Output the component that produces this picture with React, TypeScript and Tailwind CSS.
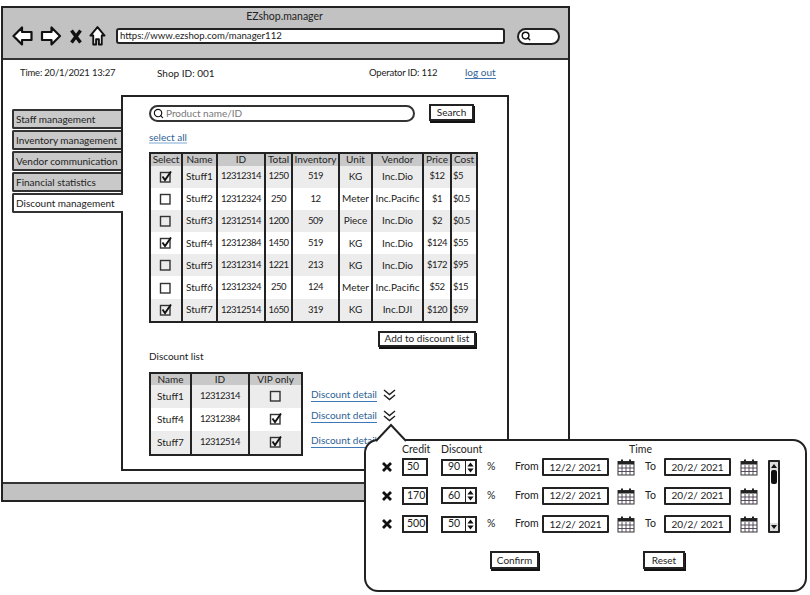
import { Search } from "lucide-react";

type Product = {
  name: string;
  id: string;
  total: string;
  inventory: string;
  unit: string;
  vendor: string;
  price: string;
  cost: string;
  selected: boolean;
};

const products: Product[] = [
  { name: "Stuff1", id: "12312314", total: "1250", inventory: "519", unit: "KG", vendor: "Inc.Dio", price: "$12", cost: "$5", selected: true },
  { name: "Stuff2", id: "12312324", total: "250", inventory: "12", unit: "Meter", vendor: "Inc.Pacific", price: "$1", cost: "$0.5", selected: false },
  { name: "Stuff3", id: "12312514", total: "1200", inventory: "509", unit: "Piece", vendor: "Inc.Dio", price: "$2", cost: "$0.5", selected: false },
  { name: "Stuff4", id: "12312384", total: "1450", inventory: "519", unit: "KG", vendor: "Inc.Dio", price: "$124", cost: "$55", selected: true },
  { name: "Stuff5", id: "12312314", total: "1221", inventory: "213", unit: "KG", vendor: "Inc.Dio", price: "$172", cost: "$95", selected: false },
  { name: "Stuff6", id: "12312324", total: "250", inventory: "124", unit: "Meter", vendor: "Inc.Pacific", price: "$52", cost: "$15", selected: false },
  { name: "Stuff7", id: "12312514", total: "1650", inventory: "319", unit: "KG", vendor: "Inc.DJI", price: "$120", cost: "$59", selected: true },
];

const discounts = [
  { name: "Stuff1", id: "12312314", vip: false },
  { name: "Stuff4", id: "12312384", vip: true },
  { name: "Stuff7", id: "12312514", vip: true },
];

const rules = [
  { credit: "50", discount: "90" },
  { credit: "170", discount: "60" },
  { credit: "500", discount: "50" },
];

const tabs = ["Staff management", "Inventory management", "Vendor communication", "Financial statistics"];

const productCols = "grid grid-cols-[32px_35px_48px_27px_47px_33px_51px_28px_24px]";
const discountCols = "grid grid-cols-[41px_58px_51px]";
const ruleCols = "grid grid-cols-[22px_39px_44px_25px_32px_75px_28px_19px_76px_28px]";
const numeric = "text-[9.5px] tracking-[-0.5px]";

function Checkbox({ checked }: { checked: boolean }) {
  return (
    <svg width="14" height="14" viewBox="0 0 14 14" fill="none">
      <rect x="1.5" y="2.5" width="9.5" height="9.5" stroke="#333" strokeWidth="1.4" />
      {checked && <path d="M3.5 6.5l2.5 3.5 6-8.5" stroke="#111" strokeWidth="1.9" />}
    </svg>
  );
}

function DoubleChevron() {
  return (
    <svg width="13" height="12" viewBox="0 0 13 12" fill="none" stroke="#222" strokeWidth="1.5">
      <path d="M1 1l5.5 4.5L12 1" />
      <path d="M1 6l5.5 4.5L12 6" />
    </svg>
  );
}

function Calendar() {
  return (
    <svg width="18" height="18" viewBox="0 0 18 18" fill="none">
      <rect x="1" y="3.5" width="16" height="13.5" fill="#fff" stroke="#333" />
      <rect x="1" y="3.5" width="16" height="3" fill="#222" />
      <path d="M1 10h16M1 13.5h16M5 7v10M9 7v10M13 7v10" stroke="#4a4050" strokeWidth="0.9" />
      <path d="M5 4V1.5M13 4V1.5" stroke="#222" strokeWidth="2" />
    </svg>
  );
}

function SketchButton({ label, className }: { label: string; className: string }) {
  return (
    <button className={`flex items-center justify-center border-2 border-[#222] bg-white shadow-[1px_2px_0_#111] text-[#222] ${className}`}>
      {label}
    </button>
  );
}

function Toolbar() {
  return (
    <div className="h-[52px] shrink-0 border-b-2 border-[#333] bg-[#c2c2c2]">
      <div className="h-[17px] pr-[2px] text-center leading-[17px] text-[#222]">EZshop.manager</div>
      <div className="flex items-center pl-[9px]">
        <svg width="50" height="22" viewBox="0 0 50 22" fill="#fff" stroke="#111" strokeWidth="2.2" strokeLinejoin="round">
          <path d="M1.5 11L10 2.5v4.5h9.5v8H10v4.5z" />
          <path d="M48 11L39.5 2.5v4.5H30v8h9.5v4.5z" />
        </svg>
        <svg className="ml-[8px]" width="12" height="15" viewBox="0 0 12 15" stroke="#111" strokeWidth="3.4">
          <path d="M1.5 1.5l9 12M10.5 1.5l-9 12" />
        </svg>
        <svg className="ml-[7px]" width="17" height="22" viewBox="0 0 18 22" fill="#fff" stroke="#111" strokeWidth="2" strokeLinejoin="round">
          <path d="M9 1.5L1.5 10.5h3V20h3v-5.5h3V20h3v-9.5h3z" />
        </svg>
        <div className="ml-[10px] flex h-[16px] w-[389px] items-center rounded-[3px] border-2 border-[#222] bg-white pl-[2px] text-[9.6px] text-[#222]">
          https://www.ezshop.com/manager112
        </div>
        <div className="ml-[12px] flex h-[17px] w-[43px] items-center rounded-full border-2 border-[#222] bg-white pl-[2px]">
          <Search size={10} strokeWidth={3.5} color="#111" />
        </div>
      </div>
    </div>
  );
}

function SideTabs() {
  return (
    <nav className="z-10 mt-[14px] ml-[9px] flex w-[109px] shrink-0 flex-col gap-[1px] text-[10px] whitespace-nowrap">
      {tabs.map((tab) => (
        <div key={tab} className="flex h-[20px] items-center rounded-l-[2px] border-2 border-r-0 border-[#333] bg-[#c9c9c9] pl-[2px] text-[#222]">
          {tab}
        </div>
      ))}
      <div className="flex h-[20px] w-[111px] items-center rounded-l-[2px] border-2 border-r-0 border-[#333] bg-white pl-[2px] text-[#222]">
        Discount management
      </div>
    </nav>
  );
}

function ProductTable() {
  return (
    <div className="mt-[8px] w-[329px] border-2 border-[#222] text-[10px]">
      <div className={`${productCols} h-[11.5px] bg-[#c8c8c8] text-center leading-[11px] whitespace-nowrap`}>
        {["Select", "Name", "ID", "Total", "Inventory", "Unit", "Vendor", "Price", "Cost"].map((head, i) => (
          <div key={head} className={i < 8 ? "border-r-2 border-[#222]" : ""}>
            {head}
          </div>
        ))}
      </div>
      {products.map((item, row) => (
        <div key={row} className={`${productCols} h-[22.2px] text-center ${row % 2 === 0 ? "bg-[#ececec]" : "bg-white"}`}>
          <div className="flex items-center justify-center border-r-2 border-[#222]">
            <Checkbox checked={item.selected} />
          </div>
          <div className="flex items-center justify-center border-r-2 border-[#222]">{item.name}</div>
          <div className={`flex items-center justify-center border-r-2 border-[#222] ${numeric}`}>{item.id}</div>
          <div className={`flex items-center justify-center border-r-2 border-[#222] ${numeric}`}>{item.total}</div>
          <div className={`flex items-center justify-center border-r-2 border-[#222] ${numeric}`}>{item.inventory}</div>
          <div className="flex items-center justify-center border-r-2 border-[#222]">{item.unit}</div>
          <div className="flex items-center justify-center border-r-2 border-[#222] whitespace-nowrap">{item.vendor}</div>
          <div className={`flex items-center justify-center border-r-2 border-[#222] ${numeric}`}>{item.price}</div>
          <div className={`flex items-center pl-[1px] ${numeric}`}>{item.cost}</div>
        </div>
      ))}
    </div>
  );
}

function DiscountTable() {
  return (
    <div className="w-[154px] border-2 border-[#222] text-[10px]">
      <div className={`${discountCols} h-[11px] bg-[#c8c8c8] text-center leading-[11px]`}>
        <div className="border-r-2 border-[#222]">Name</div>
        <div className="border-r-2 border-[#222]">ID</div>
        <div>VIP only</div>
      </div>
      {discounts.map((item, row) => (
        <div key={item.name} className={`${discountCols} h-[23px] text-center ${row % 2 === 0 ? "bg-[#ececec]" : "bg-white"}`}>
          <div className="flex items-center justify-center border-r-2 border-[#222]">{item.name}</div>
          <div className={`flex items-center justify-center border-r-2 border-[#222] ${numeric}`}>{item.id}</div>
          <div className="flex items-center justify-center">
            <Checkbox checked={item.vip} />
          </div>
        </div>
      ))}
    </div>
  );
}

function DiscountLinks() {
  return (
    <div className="ml-[8px] flex flex-col pt-[16px]">
      {[0, 1, 2].map((i) => (
        <div key={i} className={`flex h-[14px] items-center ${i === 1 ? "mt-[7px]" : i === 2 ? "mt-[11px]" : ""}`}>
          <span className="w-[66px] border-b border-[#3f78b5] text-[10px] leading-[13px] whitespace-nowrap text-[#2e5f94]">Discount detail</span>
          <span className="ml-[6px] flex">
            <DoubleChevron />
          </span>
        </div>
      ))}
    </div>
  );
}

function MainPanel() {
  return (
    <section className="h-[376px] w-[388px] shrink-0 border-2 border-[#222] pt-[8px] pl-[26px]">
      <div className="flex items-start">
        <div className="flex h-[17px] w-[266px] items-center gap-[2px] rounded-full border-2 border-[#333] pl-[2px] text-[10px] text-[#777]">
          <Search size={11} strokeWidth={2.5} color="#111" />
          Product name/ID
        </div>
        <SketchButton label="Search" className="-mt-[1px] ml-[14px] h-[17px] w-[45px] text-[10px]" />
      </div>
      <div className="mt-[10px] h-[12px] w-fit border-b-2 border-[#bcd3ea] text-[10px] leading-[11px] text-[#2e5f94]">select all</div>
      <ProductTable />
      <div className="flex w-[327px] justify-end">
        <SketchButton label="Add to discount list" className="mt-[8px] h-[16px] w-[98px] text-[10px]" />
      </div>
      <div className="mt-[3px] h-[12px] text-[10px] leading-[12px] text-[#222]">Discount list</div>
      <div className="mt-[10px] flex items-start">
        <DiscountTable />
        <DiscountLinks />
      </div>
    </section>
  );
}

function DateField({ value }: { value: string }) {
  return (
    <div className="flex h-[18px] w-[67px] items-center justify-center rounded-[1px] border-2 border-[#222] bg-white text-[10px]">{value}</div>
  );
}

function RulePopover() {
  return (
    <div className="absolute top-[439px] left-[364px] z-20 h-[153px] w-[443px] rounded-[14px] border-2 border-[#222] bg-white pt-[1px] pl-[14px] text-[#222]">
      <svg className="absolute -top-[18px] left-[8px]" width="34" height="20" viewBox="0 0 34 20" fill="#fff" stroke="#222" strokeWidth="2">
        <path d="M2 18L17 2l15 16" />
        <path d="M4 19.5h26" stroke="#fff" strokeWidth="3" />
      </svg>
      <div className={`${ruleCols} h-[14px] items-center leading-[14px]`}>
        <div className="col-start-2">Credit</div>
        <div>Discount</div>
        <div className="col-span-6 col-start-5 pl-[3px] text-center">Time</div>
      </div>
      <div className="flex">
        <div className="flex flex-col gap-[10.5px] pt-[2px]">
          {rules.map((rule) => (
            <div key={rule.credit} className={`${ruleCols} h-[18px] items-center`}>
              <svg width="10" height="10" viewBox="0 0 10 10" stroke="#111" strokeWidth="2.8" className="ml-[2px]">
                <path d="M1 1l8 8M9 1l-8 8" />
              </svg>
              <div className="flex h-[18px] w-[26px] items-center border-2 border-[#222] bg-white pl-[3px]">{rule.credit}</div>
              <div className="flex h-[17px] w-[36px] border-2 border-[#222] bg-white">
                <span className="flex w-[22px] items-center justify-center">{rule.discount}</span>
                <svg width="10" height="13" viewBox="0 0 10 13" className="border-l border-[#222]" fill="#111">
                  <path d="M5 1l3.5 4.5h-7zM5 12l3.5-4.5h-7z" />
                </svg>
              </div>
              <div className="pl-[2px]">%</div>
              <div className="pl-[5px]">From</div>
              <DateField value="12/2/ 2021" />
              <Calendar />
              <div>To</div>
              <DateField value="20/2/ 2021" />
              <Calendar />
            </div>
          ))}
        </div>
        <div className="mt-[4px] flex h-[73px] w-[12px] flex-col justify-between rounded-[1px] border-2 border-[#222] bg-white">
          <svg width="8" height="8" viewBox="0 0 8 8" fill="#111" className="bg-[#ddd]">
            <path d="M4 2l3 4H1z" />
          </svg>
          <div className="mx-auto mb-auto h-[14px] w-[6px] rounded-[2px] bg-[#111]" />
          <svg width="8" height="8" viewBox="0 0 8 8" fill="#111" className="bg-[#ddd]">
            <path d="M4 6l3-4H1z" />
          </svg>
        </div>
      </div>
      <div className="mt-[18px] flex pl-[110px] text-[10px]">
        <SketchButton label="Confirm" className="h-[18px] w-[49px]" />
        <SketchButton label="Reset" className="ml-[104px] h-[18px] w-[42px]" />
      </div>
    </div>
  );
}

export default function App() {
  return (
    <div className="relative h-[595px] w-[810px] overflow-hidden bg-white font-[Lato,sans-serif] text-[10.5px] text-[#222]">
      <div className="absolute top-[6px] left-[1px] flex h-[496px] w-[569px] flex-col border-2 border-[#222]">
        <Toolbar />
        <div className="grid h-[35px] shrink-0 grid-cols-[137px_212px_96px_auto] items-center pb-[9px] pl-[17px] text-[10px]">
          <div className="text-[9.5px] tracking-[-0.2px]">Time: 20/1/2021 13:27</div>
          <div>Shop ID: 001</div>
          <div className="text-[9.5px] tracking-[-0.2px]">Operator ID: 112</div>
          <div className="w-fit border-b border-[#3f78b5] leading-[11px] text-[#2e5f94]">log out</div>
        </div>
        <div className="flex">
          <SideTabs />
          <MainPanel />
        </div>
        <div className="mt-auto h-[18px] border-t-2 border-[#333] bg-[#c2c2c2]" />
      </div>
      <RulePopover />
    </div>
  );
}
